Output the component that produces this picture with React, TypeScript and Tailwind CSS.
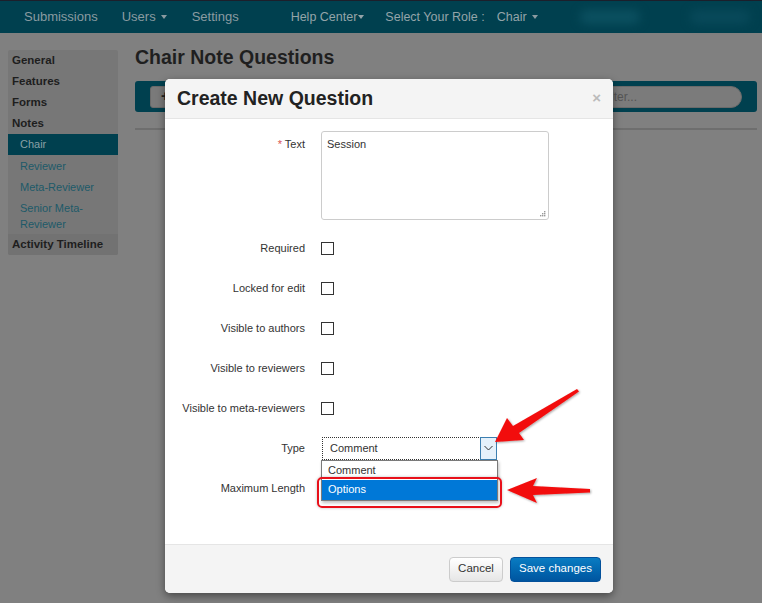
import React from "react";

const sections = [
  { label: "General", kind: "head" },
  { label: "Features", kind: "head" },
  { label: "Forms", kind: "head" },
  { label: "Notes", kind: "head" },
  { label: "Chair", kind: "active" },
  { label: "Reviewer", kind: "sub" },
  { label: "Meta-Reviewer", kind: "sub" },
  { label: "Senior Meta-Reviewer", kind: "sub" },
  { label: "Activity Timeline", kind: "foot" },
];

const checks = [
  "Required",
  "Locked for edit",
  "Visible to authors",
  "Visible to reviewers",
  "Visible to meta-reviewers",
];

function Caret() {
  return <span className="ml-[5px] inline-block border-x-[3px] border-t-[4px] border-x-transparent border-t-[#8a9ba1] align-middle" />;
}

function Box() {
  return <span className="block h-[13px] w-[13px] border border-[#333] bg-white" />;
}

export default function App() {
  return (
    <div className="relative h-[603px] w-[762px] overflow-hidden bg-[#808080] font-['Liberation_Sans',Arial,sans-serif] text-[12px] text-[#222]">
      {/* Top nav */}
      <nav className="relative flex h-[33px] items-center border-t border-[#1c1f2b] bg-[#00404f] pl-[24px] text-[13px] text-[#8a9ba1]">
        <span>Submissions</span>
        <span className="ml-[24px] flex items-center">Users<Caret /></span>
        <span className="ml-[25px]">Settings</span>
        <span className="ml-[52px] flex items-center text-[12.5px] text-[#94a4a9]">Help Center<span className="ml-[1px] inline-block border-x-[3px] border-t-[4px] border-x-transparent border-t-[#94a4a9]" /></span>
        <span className="ml-[21px] text-[12.5px] text-[#94a4a9]">Select Your Role :</span>
        <span className="ml-[12px] flex items-center text-[12.5px] text-[#94a4a9]">Chair<Caret /></span>
        <div className="absolute left-[580px] top-[9px] h-[14px] w-[60px] rounded-full bg-[#0b5060] blur-[5px]" />
        <div className="absolute left-[690px] top-[9px] h-[14px] w-[60px] rounded-full bg-[#08495a] blur-[5px]" />
      </nav>

      <div className="flex px-[8px] pt-[10px]">
        {/* Sidebar */}
        <aside className="mt-[7px] w-[110px] self-start overflow-hidden rounded-[2px] bg-[#777777] text-[11.5px]">
          {sections.map((s) =>
            s.kind === "head" ? (
              <div key={s.label} className="flex h-[21px] items-center pl-[4px] font-bold text-[#1e1e1e]">{s.label}</div>
            ) : s.kind === "active" ? (
              <div key={s.label} className="flex h-[21px] items-center bg-[#00404f] pl-[12px] text-[11px] text-[#8aa0a6]">{s.label}</div>
            ) : s.kind === "sub" ? (
              <div key={s.label} className="py-[2.5px] pl-[12px] pr-[14px] text-[11px] leading-[16px] text-[#1d5a69]">{s.label}</div>
            ) : (
              <div key={s.label} className="flex h-[21px] items-center bg-[#727272] pl-[4px] font-bold text-[#1e1e1e]">{s.label}</div>
            )
          )}
        </aside>

        {/* Content */}
        <main className="ml-[17px] mr-[-3px] flex-1">
          <h1 className="text-[19.5px] font-bold leading-[28px] text-[#1f1f1f]">Chair Note Questions</h1>
          <div className="mt-[10px] flex h-[31px] items-center justify-between rounded-[3px] bg-[#00404f] px-[15px]">
            <span className="flex h-[22px] w-[40px] items-center rounded-[3px] border border-[#6a6a6a] bg-[#7a7a7a] pl-[10px] text-[14px] font-bold text-[#222]">+</span>
            <span className="flex h-[22px] w-[152px] items-center rounded-full border border-[#6a6a6a] bg-[#7b7b7b] pl-[10px] text-[12px] text-[#555]">Filter...</span>
          </div>
          <div className="mt-[16px] h-[2px] bg-[#6e6e6e]" />
        </main>
      </div>

      {/* Modal */}
      <div className="absolute left-[165px] top-[79px] flex h-[514px] w-[448px] flex-col overflow-hidden rounded-[5px] bg-white shadow-[0_3px_8px_rgba(0,0,0,0.45)]">
        <div className="flex h-[40px] items-center justify-between border-b border-[#e5e5e5] bg-[#f4f4f4] pl-[12px] pr-[12px]">
          <h2 className="text-[19.5px] font-bold text-[#222]">Create New Question</h2>
          <span className="text-[15px] font-bold text-[#bbb]">×</span>
        </div>

        <div className="relative flex-1 pt-[12px] text-[11px]">
          <div className="flex">
            <label className="w-[140px] pt-[5px] text-right text-[#333]"><span className="text-[#d9534f]">* </span>Text</label>
            <div className="relative ml-[16px]">
              <textarea
                readOnly
                defaultValue="Session"
                className="block h-[89px] w-[228px] resize-none rounded-[3px] border border-[#ccc] px-[5px] py-[4px] text-[11px] text-[#333] outline-none"
              />
              <svg className="absolute bottom-[3px] right-[3px]" width="7" height="7" viewBox="0 0 7 7">
                <rect x="5" y="1" width="1.4" height="1.4" fill="#999" />
                <rect x="3" y="3" width="1.4" height="1.4" fill="#999" />
                <rect x="5" y="3" width="1.4" height="1.4" fill="#999" />
                <rect x="1" y="5" width="1.4" height="1.4" fill="#999" />
                <rect x="3" y="5" width="1.4" height="1.4" fill="#999" />
                <rect x="5" y="5" width="1.4" height="1.4" fill="#999" />
              </svg>
            </div>
          </div>
          <div className="mt-[8px]">
            {checks.map((c) => (
              <div key={c} className="flex h-[40px] items-center">
                <span className="w-[140px] text-right text-[#333]">{c}</span>
                <span className="ml-[16px]"><Box /></span>
              </div>
            ))}
            <div className="flex h-[40px] items-center">
              <span className="w-[140px] text-right text-[#333]">Type</span>
              <div className="relative ml-[17px] flex h-[23px] w-[175px] items-center border border-dotted border-[#333] bg-white">
                <span className="pl-[7px] text-[#333]">Comment</span>
                <span className="absolute right-[-1px] top-[-1px] flex h-[23px] w-[17px] items-center justify-center border border-[#3c7fb1] bg-[#e5f1fb]">
                  <svg width="9" height="6" viewBox="0 0 9 6"><path d="M0.5 1 L4.5 5 L8.5 1" fill="none" stroke="#333" strokeWidth="1" /></svg>
                </span>
                {/* open listbox */}
                <div className="absolute left-[-2px] top-[22px] w-[177px] border border-[#7a7a7a] bg-white shadow-[1px_2px_3px_rgba(0,0,0,0.25)]">
                  <div className="flex h-[19px] items-center pl-[6px] text-[#333]">Comment</div>
                  <div className="flex h-[20px] items-center bg-[#0078d7] pl-[6px] text-white">Options</div>
                </div>
              </div>
            </div>
            <div className="flex h-[40px] items-center">
              <span className="w-[140px] text-right text-[#333]">Maximum Length</span>
            </div>
          </div>
          {/* highlight ring around Options */}
          <div className="absolute left-[152px] top-[358px] h-[31px] w-[185px] rounded-[5px] border-2 border-[#e8101a] shadow-[0_0_3px_rgba(0,0,0,0.25)]" />
        </div>

        <div className="flex h-[49px] items-center justify-end gap-[7px] border-t border-[#e5e5e5] bg-[#f4f4f4] px-[12px] text-[11.5px]">
          <button className="h-[25px] w-[54px] rounded-[4px] border border-[#ccc] bg-gradient-to-b from-white to-[#e6e6e6] text-[#333]">Cancel</button>
          <button className="h-[25px] w-[91px] rounded-[4px] border border-[#04519b] bg-gradient-to-b from-[#0a7cc2] to-[#0055a0] text-white">Save changes</button>
        </div>
      </div>

      {/* Annotation arrows */}
      <svg className="pointer-events-none absolute left-0 top-0" width="762" height="603">
        <defs>
          <filter id="sh" x="-20%" y="-20%" width="140%" height="140%">
            <feDropShadow dx="1" dy="1" stdDeviation="1.2" floodOpacity="0.35" />
          </filter>
        </defs>
        <polygon
          filter="url(#sh)"
          fill="#f20d0d"
          points="495,442 507,418 513,426 577,389 579,391.5 519,433 524,440"
        />
        <polygon
          filter="url(#sh)"
          fill="#f20d0d"
          points="507,490 537,478 533,486 590,489 590,492.5 533,495 537,503"
        />
      </svg>
    </div>
  );
}
